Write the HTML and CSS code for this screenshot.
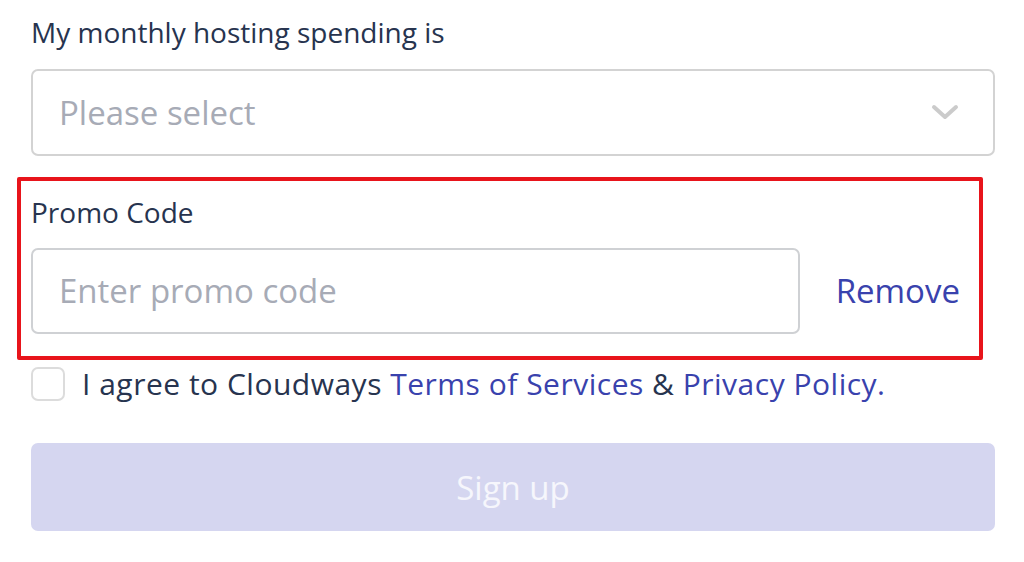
FILE: index.html
```html
<!DOCTYPE html>
<html lang="en">
<head>
<meta charset="utf-8">
<title>Sign up</title>
<link rel="stylesheet" href="styles.css">
</head>
<body>
<form class="form">
  <label class="label label-spend">My monthly hosting spending is</label>
  <div class="select">
    <span class="placeholder">Please select</span>
    <svg class="chevron" width="28" height="18" viewBox="0 0 28 18"><path d="M3 3 L14 13 L25 3" fill="none" stroke="#cbcbcb" stroke-width="4" stroke-linecap="round" stroke-linejoin="round"/></svg>
  </div>
  <section class="promo">
    <label class="label label-promo">Promo Code</label>
    <div class="promo-row">
      <div class="input"><span class="placeholder">Enter promo code</span></div>
      <a class="remove">Remove</a>
    </div>
  </section>
  <div class="agree">
    <span class="checkbox"></span>
    <span class="agree-text">I agree to Cloudways <a class="link">Terms of Services</a> &amp; <a class="link">Privacy Policy.</a></span>
  </div>
  <button type="button" class="signup">Sign up</button>
</form>
</body>
</html>
```

FILE: styles.css
```css
* { box-sizing: border-box; }
html, body { margin: 0; padding: 0; background: #ffffff; }
body {
  font-family: "Open Sans", "Liberation Sans", sans-serif;
  color: #27344f;
  width: 1024px;
  height: 562px;
  overflow: hidden;
}
.form {
  padding: 0 29px 0 31px;
  display: flex;
  flex-direction: column;
}
.label {
  display: block;
  font-size: 28px;
  line-height: 34px;
  color: #27344f;
}
.label-spend { margin-top: 15px; }
.select {
  margin-top: 20px;
  height: 87px;
  border: 2px solid #d3d3d3;
  border-radius: 7px;
  display: flex;
  align-items: center;
  justify-content: space-between;
  padding: 0 34px 0 26px;
}
.placeholder {
  font-size: 33px;
  line-height: 40px;
  color: #a7abb6;
}
.chevron { display: block; }
.promo {
  margin: 21px 12px 0 -14px;
  border: 4px solid #e8141b;
  border-radius: 2px;
  padding: 14px 19px 22px 10px;
}
.promo-row {
  margin-top: 19px;
  display: flex;
  align-items: center;
  justify-content: space-between;
}
.input {
  width: 769px;
  height: 86px;
  border: 2px solid #cfd1d4;
  border-radius: 7px;
  display: flex;
  align-items: center;
  padding-left: 26px;
}
.remove {
  font-size: 33px;
  line-height: 40px;
  color: #3942ad;
}
.agree {
  margin-top: 6px;
  display: flex;
  align-items: center;
  gap: 17px;
}
.checkbox {
  width: 34px;
  height: 34px;
  border: 2px solid #dcdcdc;
  border-radius: 7px;
  flex: none;
}
.agree-text {
  font-size: 30px;
  letter-spacing: 0.5px;
  line-height: 36px;
  color: #27344f;
}
.link { color: #3942ad; }
.signup {
  margin-top: 41px;
  height: 88px;
  border: none;
  border-radius: 7px;
  background: #d5d6f0;
  color: #f6f6fc;
  font-family: inherit;
  font-size: 33px;
  cursor: pointer;
}
```
